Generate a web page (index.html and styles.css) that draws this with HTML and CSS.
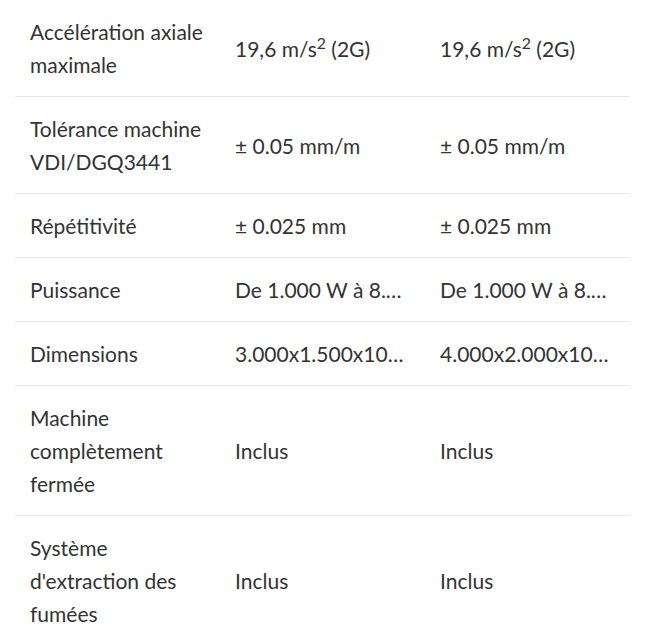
FILE: index.html
```html
<!DOCTYPE html>
<html lang="fr">
<head>
<meta charset="utf-8">
<title>Caractéristiques</title>
<link rel="stylesheet" href="styles.css">
</head>
<body>
<div class="wrap">
<table class="specs">
<colgroup><col class="c1"><col class="c2"><col class="c3"></colgroup>
<tbody>
<tr><th>Accélération axiale maximale</th><td>19,6 m/s<sup>2</sup> (2G)</td><td>19,6 m/s<sup>2</sup> (2G)</td></tr>
<tr><th>Tolérance machine VDI/DGQ3441</th><td>± 0.05 mm/m</td><td>± 0.05 mm/m</td></tr>
<tr><th>Répétitivité</th><td>± 0.025 mm</td><td>± 0.025 mm</td></tr>
<tr><th>Puissance</th><td>De 1.000 W à 8.000 W</td><td>De 1.000 W à 8.000 W</td></tr>
<tr><th>Dimensions</th><td>3.000x1.500x100 mm</td><td>4.000x2.000x100 mm</td></tr>
<tr><th>Machine complètement fermée</th><td>Inclus</td><td>Inclus</td></tr>
<tr><th>Système d'extraction des fumées</th><td>Inclus</td><td>Inclus</td></tr>
</tbody>
</table>
</div>
</body>
</html>
```
FILE: styles.css
```css
html, body { margin: 0; padding: 0; background: #fff; }
.wrap { padding: 0 29px 0 15px; }
.specs {
  width: 615px;
  border-collapse: collapse;
  table-layout: fixed;
  font-family: Lato, "Open Sans", sans-serif;
  font-size: 21px;
  color: #333;
}
.specs th, .specs td {
  padding: 15px 15px;
  line-height: 33px;
  text-align: left;
  font-weight: normal;
  vertical-align: middle;
  border-bottom: 1px solid #e8e8e8;
}
.specs td {
  white-space: nowrap;
  overflow: hidden;
  text-overflow: ellipsis;
}
.specs sup { font-size: 0.75em; line-height: 0; vertical-align: 0.5em; }
.c1, .c2, .c3 { width: 205px; }
```
